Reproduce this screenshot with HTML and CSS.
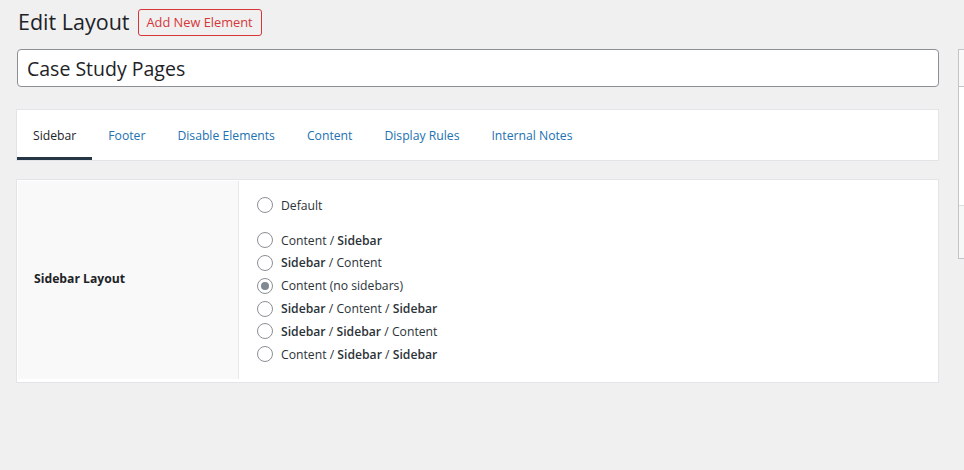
FILE: index.html
```html
<!DOCTYPE html>
<html lang="en">
<head>
    <meta charset="UTF-8">
    <title>Edit Layout</title>
    <link rel="stylesheet" href="styles.css">
</head>
<body>
    <div class="wrap">
        <div class="main">
            <div class="heading">
                <h1>Edit Layout</h1>
                <a class="page-title-action" href="#">Add New Element</a>
            </div>

            <input class="title-input" type="text" value="Case Study Pages">

            <div class="tabs">
                <a class="tab active" href="#">Sidebar</a>
                <a class="tab" href="#">Footer</a>
                <a class="tab" href="#">Disable Elements</a>
                <a class="tab" href="#">Content</a>
                <a class="tab" href="#">Display Rules</a>
                <a class="tab" href="#">Internal Notes</a>
            </div>

            <div class="settings">
                <div class="settings-label">Sidebar Layout</div>
                <div class="settings-field">
                    <label class="option default-option"><span class="radio"></span><span>Default</span></label>
                    <label class="option"><span class="radio"></span><span>Content / <b>Sidebar</b></span></label>
                    <label class="option"><span class="radio"></span><span><b>Sidebar</b> / Content</span></label>
                    <label class="option"><span class="radio checked"></span><span>Content (no sidebars)</span></label>
                    <label class="option"><span class="radio"></span><span><b>Sidebar</b> / Content / <b>Sidebar</b></span></label>
                    <label class="option"><span class="radio"></span><span><b>Sidebar</b> / <b>Sidebar</b> / Content</span></label>
                    <label class="option"><span class="radio"></span><span>Content / <b>Sidebar</b> / <b>Sidebar</b></span></label>
                </div>
            </div>
        </div>

        <div class="side">
            <div class="postbox">
                <div class="postbox-head"></div>
                <div class="postbox-body"></div>
                <div class="postbox-foot"></div>
            </div>
        </div>
    </div>
</body>
</html>
```

FILE: styles.css
```css
body {
    margin: 0;
    background-color: #f0f0f1;
    font-family: "Open Sans", "Noto Sans", sans-serif;
    color: #1d2327;
    overflow: hidden;
}

.wrap {
    display: flex;
    padding: 8px 0 0 16px;
}

.main {
    width: 923px;
    flex-shrink: 0;
}

.heading {
    display: flex;
    align-items: center;
    height: 28px;
}

h1 {
    margin: 0 0 0 2px;
    font-size: 21.5px;
    font-weight: 400;
    line-height: 28px;
}

.page-title-action {
    margin-left: 8px;
    height: 25px;
    padding: 0 8px;
    border: 1px solid #d63638;
    border-radius: 3px;
    color: #d63638;
    font-size: 12.8px;
    line-height: 25px;
    text-decoration: none;
}

.title-input {
    display: block;
    box-sizing: border-box;
    width: 922px;
    height: 38px;
    margin: 13px 0 0 1px;
    padding: 0 9px;
    border: 1px solid #8c8f94;
    border-radius: 4px;
    background: #fff;
    font-family: inherit;
    font-size: 19.5px;
    color: #1d2327;
}

.tabs {
    display: flex;
    height: 50px;
    margin-top: 22px;
    background: #fff;
    border: 1px solid #e2e4e7;
}

.tab {
    display: flex;
    align-items: center;
    padding: 3px 16px 0;
    font-size: 12.2px;
    color: #2271b1;
    text-decoration: none;
    border-bottom: 3px solid transparent;
}

.tab.active {
    color: #1d2327;
    border-bottom-color: #253746;
}

.settings {
    display: flex;
    margin-top: 18px;
    background: #fff;
    border: 1px solid #e2e4e7;
    padding: 1px 1px 3px 1px;
}

.settings-label {
    display: flex;
    align-items: center;
    width: 204px;
    padding: 0 0 2px 16px;
    background: #f9f9f9;
    border-right: 1px solid #e8e8e8;
    font-size: 12.2px;
    font-weight: 700;
}

.settings-field {
    display: flex;
    flex-direction: column;
    padding: 13px 18px 13px;
}

.option {
    display: flex;
    align-items: center;
    height: 22.8px;
    font-size: 12.2px;
    color: #2c3338;
}

.option b {
    font-weight: 600;
}

.default-option {
    margin-bottom: 12px;
}

.radio {
    box-sizing: border-box;
    width: 16px;
    height: 16px;
    margin-right: 8px;
    border: 1px solid #8c8f94;
    border-radius: 50%;
    background: #fff;
    display: flex;
    align-items: center;
    justify-content: center;
}

.radio.checked::after {
    content: "";
    width: 8px;
    height: 8px;
    border-radius: 50%;
    background: #7e8993;
}

.side {
    flex: 1;
    min-width: 0;
    overflow: hidden;
    margin-left: 19px;
    margin-top: 41px;
}

.postbox {
    width: 280px;
    border: 1px solid #c3c4c7;
    background: #fff;
}

.postbox-head {
    height: 36px;
    border-bottom: 1px solid #c3c4c7;
    background: #f9f9f9;
}

.postbox-body {
    height: 118px;
}

.postbox-foot {
    height: 52px;
    border-top: 1px solid #dcdcde;
    background: #f6f7f7;
}
```
